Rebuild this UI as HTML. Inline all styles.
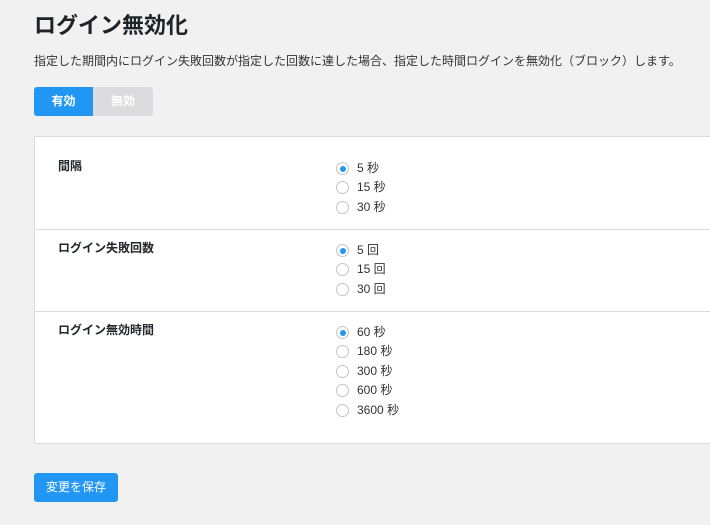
<!DOCTYPE html>
<html><head><meta charset="utf-8"><style>
body{margin:0;background:#f1f1f1;font-family:"Liberation Sans","Noto Sans CJK JP",sans-serif;color:#23282d;width:710px;height:525px;overflow:hidden;position:relative}
.a{position:absolute}
h1{position:absolute;left:34px;top:8px;margin:0;font-size:22px;font-weight:bold;color:#1d2327}
.desc{left:34px;top:52px;font-size:12px;color:#333}
.tog{left:34px;top:87px;height:29px;width:119px;border-radius:3px;background:#dcdcde;overflow:hidden;font-size:12px;font-weight:bold;color:#fff}
.tog span{position:absolute;top:0;height:29px;line-height:29px;text-align:center}
.panel{left:34px;top:136px;width:690px;height:306px;background:#fff;border:1px solid #dcdcde}
.lbl{font-size:12px;font-weight:bold;left:58px}
.hr{left:35px;width:680px;height:1px;background:#dcdcde}
.r{left:336px;font-size:12px;height:20px;line-height:20px;color:#333}
.r i{display:inline-block;width:13px;height:13px;border:1px solid #c3c4c7;border-radius:50%;vertical-align:-3px;margin-right:8px;box-sizing:border-box;background:#fff;position:relative}
.r i.on::after{content:"";position:absolute;left:2.5px;top:2.5px;width:6px;height:6px;border-radius:50%;background:#2271b1;background:#2196f3}
.btn{left:34px;top:473px;width:84px;height:29px;background:#2196f3;border-radius:3px;color:#fff;font-size:12px;line-height:29px;text-align:center}
</style></head><body>
<h1>ログイン無効化</h1>
<div class="a desc">指定した期間内にログイン失敗回数が指定した回数に達した場合、指定した時間ログインを無効化（ブロック）します。</div>
<div class="a tog"><span style="left:0;width:59px;background:#2196f3">有効</span><span style="left:59px;width:60px">無効</span></div>
<div class="a panel"></div>
<div class="a lbl" style="top:157px">間隔</div>
<div class="a r" style="top:158px"><i class="on"></i>5 秒</div>
<div class="a r" style="top:177px"><i></i>15 秒</div>
<div class="a r" style="top:197px"><i></i>30 秒</div>
<div class="a hr" style="top:229px"></div>
<div class="a lbl" style="top:239px">ログイン失敗回数</div>
<div class="a r" style="top:240px"><i class="on"></i>5 回</div>
<div class="a r" style="top:259px"><i></i>15 回</div>
<div class="a r" style="top:279px"><i></i>30 回</div>
<div class="a hr" style="top:311px"></div>
<div class="a lbl" style="top:321px">ログイン無効時間</div>
<div class="a r" style="top:322px"><i class="on"></i>60 秒</div>
<div class="a r" style="top:341px"><i></i>180 秒</div>
<div class="a r" style="top:361px"><i></i>300 秒</div>
<div class="a r" style="top:380px"><i></i>600 秒</div>
<div class="a r" style="top:400px"><i></i>3600 秒</div>
<div class="a btn">変更を保存</div>
</body></html>
